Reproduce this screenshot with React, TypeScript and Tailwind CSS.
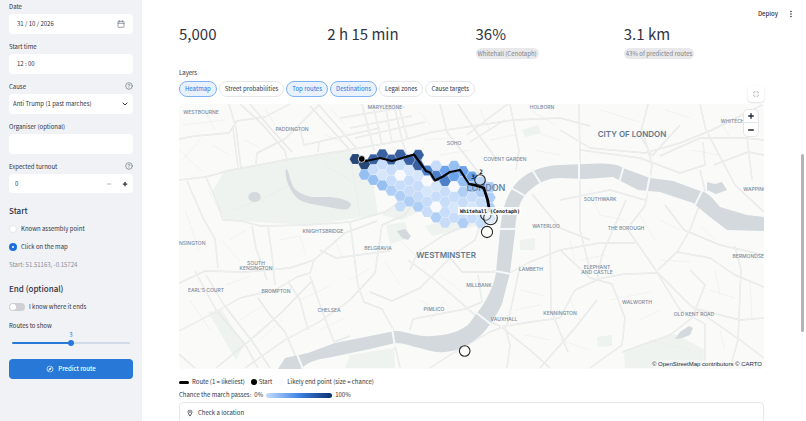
import React, { useState } from 'react';
import { Calendar, ChevronDown, CircleHelp, Maximize, Minus, Plus } from 'lucide-react';
import { MdMoreVert, MdOutlineExplore, MdOutlineLocationOn } from 'react-icons/md';

const metrics = [
  { value: '5,000', note: '' },
  { value: '2 h 15 min', note: '' },
  { value: '36%', note: 'Whitehall (Cenotaph)' },
  { value: '3.1 km', note: '43% of predicted routes' },
];

const layerNames = ['Heatmap', 'Street probabilities', 'Top routes', 'Destinations', 'Legal zones', 'Cause targets'];

// Hexagon fill per probability level, 0 is the most likely
const levels = ['#15396f', '#28549a', '#3d74c6', '#5f9be8', '#8ebbf1', '#a9cbf5', '#c3daf9', '#d3e4fb', '#f7f9fd'];

// [column, first row, one level digit per row going down]
const hexColumns: [number, number, string][] = [
  [0, 0, '0'],
  [1, 0, '04'],
  [2, 0, '164'],
  [3, -1, '1674'],
  [4, 0, '1665'],
  [5, -1, '168656'],
  [6, 0, '17665'],
  [7, -1, '117665'],
  [8, 1, '28766'],
  [9, 0, '627685'],
  [10, 1, '326666'],
  [11, 0, '438676'],
  [12, 1, '345665'],
  [13, 1, '34676'],
  [14, 2, '45666'],
  [15, 2, '5556'],
];

const hexagons = hexColumns.flatMap(([col, firstRow, cells]) =>
  cells.split('').map((level, i) => {
    const cx = 355.4 + col * 8.97;
    const cy = 159 + (col % 2) * 5.2 + (firstRow + i) * 10.35 + col * 0.15;
    const points = [0, 60, 120, 180, 240, 300]
      .map((a) => {
        const rad = (a * Math.PI) / 180;
        return `${(cx + 5.9 * Math.cos(rad)).toFixed(1)},${(cy + 5.9 * Math.sin(rad)).toFixed(1)}`;
      })
      .join(' ');
    return { points, fill: levels[Number(level)] };
  })
);

const districts: [number, number, string][] = [
  [201, 114, 'WESTBOURNE'],
  [292, 131, 'PADDINGTON'],
  [385, 109, 'MARYLEBONE'],
  [454, 145, 'SOHO'],
  [542, 109, 'HOLBORN'],
  [505, 161, 'COVENT GARDEN'],
  [323, 233, 'KNIGHTSBRIDGE'],
  [378, 250, 'BELGRAVIA'],
  [189, 245, 'KENSINGTON'],
  [256, 265, 'SOUTH'],
  [256, 270, 'KENSINGTON'],
  [206, 292, "EARL'S COURT"],
  [276, 293, 'BROMPTON'],
  [329, 312, 'CHELSEA'],
  [479, 287, 'MILLBANK'],
  [434, 311, 'PIMLICO'],
  [504, 321, 'VAUXHALL'],
  [531, 271, 'LAMBETH'],
  [560, 315, 'KENNINGTON'],
  [546, 228, 'WATERLOO'],
  [600, 201, 'SOUTHWARK'],
  [626, 230, 'THE BOROUGH'],
  [597, 269, 'ELEPHANT'],
  [597, 274, 'AND CASTLE'],
  [637, 304, 'WALWORTH'],
  [694, 316, 'OLD KENT ROAD'],
  [750, 258, 'BERMONDSEY'],
  [739, 123, 'WHITECHAPEL'],
  [755, 191, 'WAPPING'],
];

const mainRoads = [
  'M179 180 L205 177 L232 170 L285 160 L348 150 L400 141 L432 132 L480 125 L513 120 L560 118 L590 126',
  'M179 139 L195 136 L229 133 L237 121 L265 117 L290 104',
  'M229 104 L236 128 L241 168 M233 128 L238 167',
  'M240 104 L262 124 L285 151 L287 160',
  'M250 104 L272 130 L292 152',
  'M256 164 L257 153 L285 139 L318 106',
  'M300 128 L304 145 L380 128 M318 152 L319 142',
  'M310 106 L350 150 M318 104 L358 150',
  'M362 104 L374 150 M373 104 L382 145 M385 104 L392 143 M398 104 L408 140',
  'M340 118 L405 107 M350 128 L412 116 M355 138 L425 122',
  'M206 177 L218 205 L223 220 L242 221 L260 226 L308 225 L350 222 L385 212 L425 184',
  'M187 181 L203 218 L215 239 L218 268',
  'M179 283 L205 271 L245 272 L290 268 L314 260 L345 233 L377 221',
  'M252 226 L256 248 L267 280 M268 226 L272 256 L275 285',
  'M179 331 L216 312 L240 298 L275 290 L297 277 L310 273 L314 260',
  'M195 271 L216 310 L245 344 L258 368 M206 275 L224 305 L252 341 L270 368',
  'M258 298 L270 315 L285 332 L300 366',
  'M179 354 L195 368 M216 368 L248 342 L282 312 L313 280',
  'M245 368 L285 340 L319 322 L350 300 L375 273',
  'M350 222 L358 286 L364 302 L382 309 L394 331 L395 350',
  'M310 276 L320 305 L334 342 L350 336',
  'M289 283 L300 300 L308 330',
  'M320 250 L336 258 L366 254 L390 251',
  'M394 104 L402 140 L410 165 L425 184',
  'M425 184 L405 215 L382 225 L375 273',
  'M440 104 L447 132 L465 155 L484 180',
  'M458 104 L475 130 L497 160',
  'M510 104 L519 150 L516 170',
  'M467 135 L490 117 L508 104 M470 142 L505 120',
  'M408 260 L435 280 L475 315 L500 326 L530 350 L550 368',
  'M370 292 L392 301 L420 288 L453 255 L475 240 L489 200',
  'M410 270 L418 252 L444 235 L474 222',
  'M448 255 L462 272 L495 272',
  'M410 330 L413 319 L465 309 L482 302 L478 275',
  'M493 271 L510 273 L530 262 L560 250 L600 243 L635 243',
  'M500 327 L530 322 L560 318 L575 290 L597 280 L602 255 L626 200',
  'M395 345 L400 368 M430 368 L450 355 L490 332 L505 326 L510 345 L507 368',
  'M520 265 L515 290 L507 326',
  'M550 230 L551 310 L568 352 M540 368 L575 328 L597 300',
  'M560 250 L590 278 L612 284 L625 318 L622 345 L590 368',
  'M597 279 L625 274 L658 273 L690 305 L740 340 L764 358',
  'M628 230 L655 269 L680 310 L705 324',
  'M622 352 L670 335 L692 318 L705 285 L690 270',
  'M579 104 L580 160 L580 230 L590 270',
  'M643 132 L652 165 L650 180 L645 206 L630 225',
  'M580 150 L640 158 L680 173 L705 165 L703 142',
  'M560 130 L590 148 L645 153 L680 143 L712 130 L764 104',
  'M700 170 L705 190 L690 230 L677 252 L658 270',
  'M660 156 L700 138 L745 138 L764 140',
  'M648 104 L640 135 L652 156 L680 125',
  'M700 104 L706 130 L735 185 L764 212',
  'M665 205 L684 230 L720 245 L764 255',
  'M677 252 L710 258 L735 275 L764 287',
  'M735 246 L741 270 L738 340 L730 368',
  'M693 308 L740 320 L764 318 M705 323 L705 368',
  'M714 165 L748 152 L764 155 M745 120 L752 180',
  'M532 194 L560 228 L590 240 M560 200 L610 190 L645 200',
];

// Minor streets drawn thinner below the main network
const sideStreets = [
  'M183 160 L200 140 M179 150 L203 172 M208 190 L222 215 M185 210 L199 250 M222 240 L240 262',
  'M230 240 L246 230 M280 240 L300 236 L306 256 M335 240 L342 256 M226 285 L250 276 M190 300 L210 330',
  'M240 320 L262 306 M260 340 L282 320 M300 300 L330 286 M320 330 L345 318 M350 280 L370 268',
  'M385 262 L400 285 M400 240 L418 258 M420 300 L440 312 M440 275 L462 292 M430 320 L445 300',
  'M520 290 L545 296 M515 310 L540 305 M525 335 L550 340 M560 340 L590 350 M570 300 L580 320',
  'M600 215 L625 220 M590 190 L600 215 M640 215 L655 240 M660 220 L680 230 M700 225 L715 240',
  'M610 300 L650 292 M640 320 L660 310 M650 340 L690 350 M715 270 L720 295 M710 290 L735 298',
  'M720 330 L725 350 M750 280 L752 320 M660 260 L690 262 M580 260 L605 255 M570 240 L575 262',
  'M600 110 L640 122 M605 130 L635 138 M665 110 L690 118 M690 150 L720 155 M720 120 L730 138',
  'M530 110 L555 125 M525 130 L560 140 M535 150 L560 155 M480 110 L490 130 M490 140 L515 135',
  'M418 110 L430 125 M425 140 L450 138 M440 155 L470 150 M205 110 L215 130 M265 108 L275 125',
  'M182 125 L225 120 M212 145 L230 155 M245 140 L260 148 M330 108 L345 125 M325 135 L342 142',
];

const parks = [
  'M225 170 L290 158 L350 150 L372 172 L378 215 L310 225 L225 220 L212 192 Z',
  'M382 215 L418 190 L430 206 L402 220 Z',
  'M386 225 L405 222 L410 238 L390 244 Z',
  'M425 226 L474 213 L476 226 L432 236 Z',
  'M208 312 L222 310 L244 345 L236 360 Z',
  'M350 355 L394 348 L395 368 L345 368 Z',
  'M624 352 L675 334 L705 350 L702 368 L625 368 Z',
  'M520 240 L535 238 L535 250 L520 250 Z',
  'M522 130 L538 125 L541 133 L525 137 Z',
  'M597 337 L612 335 L612 346 L598 347 Z',
];

const riverPath =
  'M764 217 L747 215 L720 207 C712 198 710 194 703 192 L673 181 L650 178 L623 168 C616 163 600 163 585 164 L560 165 C540 166 525 172 514 186 C505 198 502 212 500 231 L496 272 C495 284 486 302 477 313 C471 320 470 325 463 328 C454 335 428 338 417 335 C405 333 403 331 395 331 L370 336 L335 343 L308 353 L285 358 L278 369 L301 369 C310 360 320 359 332 357 L370 349 L395 343 C405 343 410 346 420 348 C430 351 437 353 445 352 C455 351 460 349 467 345 C477 339 483 334 488 327 C496 316 502 306 503 300 L510 273 L515 232 C516 212 520 198 530 190 C540 181 550 178 560 178 L585 179 L613 177 L638 190 L660 192 L693 203 L710 217 L727 230 L764 231 Z';

const routePath =
  'M361.5 162 L380 158 L392 161 L414 154.5 L426 171 L430 172.5 L435 180.5 L443 176.5 L450 172 L460 170 L469 184 L477 185 L483.5 188 L487 199 L489.5 211';

const endPoints: [number, number, number][] = [
  [480, 180, 5.3],
  [485.8, 215, 5.2],
  [490.5, 218, 6.8],
  [487, 232, 5.6],
  [464.7, 351, 5.3],
];

const MapView = () => (
  <div className="relative overflow-hidden rounded-sm">
    <svg viewBox="179 104 585 265" preserveAspectRatio="xMidYMid slice" className="block h-[265px] w-full bg-[#fafaf8]" role="img" aria-label="Predicted march map">
      {parks.map((d) => (
        <path key={d} d={d} fill="#eef3ef" />
      ))}
      <g fill="none" strokeLinejoin="round">
        {sideStreets.map((d) => (
          <path key={d} d={d} stroke="#ededed" strokeWidth="0.6" />
        ))}
        {mainRoads.map((d) => (
          <path key={d} d={d} stroke="#e0e2e3" strokeWidth="1.4" />
        ))}
        {mainRoads.map((d) => (
          <path key={d} d={d} stroke="#f8f8f7" strokeWidth="0.6" />
        ))}
        <path d="M232 210 L260 200 L290 185 M240 180 L275 215 M300 160 L330 190 M325 165 L350 180 M350 155 L360 215" stroke="#e6ede8" strokeWidth="0.7" />
      </g>

      {/* Water */}
      <g fill="#d3d9dd">
        <path d={riverPath} />
        <ellipse cx="254.5" cy="197" rx="6.2" ry="5" />
        <path d="M286 169 C288 168 289 176 292 184 C295 192 303 195 312 197 L330 197 C340 198 350 201 351 204 C350 210 345 210 339 209 L312 204 C300 202 294 197 290 188 C286 181 285 173 286 169 Z" />
        <path d="M397 231 L405 229 L411 236 L408 240 L402 238 Z" />
        <path d="M675 339 L680 332 L689 326 L693 328 L690 335 L682 338 Z" />
        <path d="M707 182 L715 184 L722 182 L727 190 L716 194 L707 190 Z" />
      </g>
      {/* Bridges */}
      <path
        d="M579 160 L579 181 M624 166 L618 186 M650 175 L646 196 M703 189 L694 207 M495 271 L511 274 M474 311 L492 325 M392 328 L395 347 M296 352 L303 369 M499 229 L517 229 M508 186 L527 197 M531 168 L543 187"
        stroke="#f7f8f8"
        strokeWidth="2"
        fill="none"
      />

      <g fill="#7b8b9d" fontFamily="Inter, sans-serif" fontSize="5" fontWeight="500" textAnchor="middle">
        {districts.map(([x, y, name]) => (
          <text key={`${name}${x}`} x={x} y={y}>{name}</text>
        ))}
      </g>
      <g fill="#64798e" fontFamily="Inter, sans-serif" fontSize="8" fontWeight="600" textAnchor="middle">
        <text x="632" y="137">CITY OF LONDON</text>
        <text x="446" y="258">WESTMINSTER</text>
      </g>

      <g stroke="#ffffff" strokeOpacity="0.4" strokeWidth="0.4" fillOpacity="0.92">
        {hexagons.map((hex) => (
          <polygon key={hex.points} points={hex.points} fill={hex.fill} />
        ))}
      </g>
      <text x="486" y="191" fill="#6e87a8" fontFamily="Inter, sans-serif" fontSize="9" fontWeight="600" textAnchor="middle">LONDON</text>

      {/* Routes and end points */}
      <path d={routePath} fill="none" stroke="#050505" strokeWidth="2.2" strokeLinejoin="round" strokeLinecap="round" />
      <path d="M469 184 L477 186 L484 188 L488 200 L490 212" fill="none" stroke="#050505" strokeWidth="2.2" />
      <circle cx="361.7" cy="159" r="3.4" fill="#000000" stroke="#ffffff" strokeWidth="0.8" />
      {endPoints.map(([x, y, r]) => (
        <circle key={`${x}-${y}`} cx={x} cy={y} r={r} fill="#ffffff" fillOpacity="0.35" stroke="#2a2a2a" strokeWidth="1.1" />
      ))}
      <rect x="458" y="207" width="64" height="8" fill="#ffffff" fillOpacity="0.85" />
      <g fill="#111111" fontFamily="'DejaVu Sans Mono', monospace" fontWeight="700" textAnchor="middle">
        <text x="490" y="213" fontSize="5">Whitehall (Cenotaph)</text>
        <text x="481" y="174" fontSize="6">2</text>
        <text x="473" y="179" fontSize="6">3</text>
      </g>
    </svg>

    <div className="absolute top-1.5 right-1.5 flex w-3.5 flex-col divide-y divide-gray-200 rounded-sm bg-white text-gray-800 ring-1 ring-gray-200">
      <button type="button" aria-label="Zoom in" className="flex h-[13px] items-center justify-center">
        <Plus className="size-2" strokeWidth={4} />
      </button>
      <button type="button" aria-label="Zoom out" className="flex h-[13px] items-center justify-center">
        <Minus className="size-2" strokeWidth={4} />
      </button>
    </div>
    <p className="absolute right-0.5 bottom-0 bg-[#fafaf8]/50 font-['Liberation_Sans'] text-[6px] leading-[9px] text-gray-800">
      © <a href="#osm">OpenStreetMap</a> contributors © <a href="#carto">CARTO</a>
    </p>
  </div>
);

const Sidebar = () => {
  const [date, setDate] = useState('31 / 10 / 2026');
  const [time, setTime] = useState('12 : 00');
  const [organiser, setOrganiser] = useState('');
  const [turnout, setTurnout] = useState(0);
  const [startMode, setStartMode] = useState('map');
  const [knowsEnd, setKnowsEnd] = useState(false);
  const [routes, setRoutes] = useState(3);

  const percent = ((routes - 1) / 4) * 100;

  return (
    <aside className="w-[142px] shrink-0 bg-[#f0f2f6] px-[9px] pt-0.5">
      <div className="flex flex-col gap-2">
        <div>
          <label htmlFor="date" className="block h-3 leading-[10px]">Date</label>
          <div className="flex h-[20px] items-center rounded bg-white px-2">
            <input id="date" className="min-w-0 flex-1 outline-none" value={date} onChange={(e) => setDate(e.target.value)} />
            <Calendar className="size-2 text-gray-500" />
          </div>
        </div>
        <div>
          <label htmlFor="time" className="block h-3 leading-[10px]">Start time</label>
          <div className="flex h-[20px] items-center rounded bg-white px-2">
            <input id="time" className="min-w-0 flex-1 outline-none" value={time} onChange={(e) => setTime(e.target.value)} />
          </div>
        </div>
        <div>
          <div className="flex h-3 items-start justify-between">
            <label htmlFor="cause" className="leading-[10px]">Cause</label>
            <CircleHelp className="size-2 text-gray-500" />
          </div>
          <div className="relative">
            <select id="cause" className="block h-[20px] w-full appearance-none rounded bg-white px-1 outline-none">
              <option>Anti Trump (1 past marches)</option>
            </select>
            <ChevronDown className="pointer-events-none absolute top-1.5 right-1 size-2" strokeWidth={3} />
          </div>
        </div>
        <div>
          <label htmlFor="organiser" className="block h-3 leading-[10px]">Organiser (optional)</label>
          <input id="organiser" className="block h-[20px] w-full rounded bg-white px-1 outline-none" value={organiser} onChange={(e) => setOrganiser(e.target.value)} />
        </div>
        <div>
          <div className="flex h-3 items-start justify-between">
            <label htmlFor="turnout" className="leading-[10px]">Expected turnout</label>
            <CircleHelp className="size-2 text-gray-500" />
          </div>
          <div className="flex h-[19px] items-center rounded bg-white pl-1.5">
            <input id="turnout" className="min-w-0 flex-1 outline-none" value={turnout} onChange={(e) => setTurnout(Number(e.target.value) || 0)} />
            <button type="button" aria-label="Decrease" className="flex size-4 items-center justify-center text-gray-400" onClick={() => setTurnout(Math.max(0, turnout - 100))}>
              <Minus className="size-1.5" strokeWidth={3} />
            </button>
            <button type="button" aria-label="Increase" className="flex size-4 items-center justify-center" onClick={() => setTurnout(turnout + 100)}>
              <Plus className="size-1.5" strokeWidth={5} />
            </button>
          </div>
        </div>
      </div>

      <h2 className="mt-3 text-[8px] leading-3 font-medium">Start</h2>
      <div className="mt-1.5 flex flex-col gap-1.5">
        <label className="flex h-3 items-center gap-1">
          <input type="radio" name="start" className="size-2 appearance-none rounded-full border border-gray-200 bg-white checked:border-[3px] checked:border-[#1c6fe0]" checked={startMode === 'point'} onChange={() => setStartMode('point')} />
          Known assembly point
        </label>
        <label className="flex h-3 items-center gap-1">
          <input type="radio" name="start" className="size-2 appearance-none rounded-full border border-gray-200 bg-white checked:border-[3px] checked:border-[#1c6fe0]" checked={startMode === 'map'} onChange={() => setStartMode('map')} />
          Click on the map
        </label>
        <p className="h-3 leading-3 text-[#8b8d96]">Start: 51.51163, -0.15724</p>
      </div>

      <h2 className="mt-3 text-[8px] leading-3 font-medium">End (optional)</h2>
      <label className="mt-1.5 flex h-3 items-center gap-1">
        <input
          type="checkbox"
          role="switch"
          className="flex h-2 w-4 appearance-none items-center rounded-full bg-[#cfd0d6] px-px before:size-1.5 before:rounded-full before:bg-white checked:justify-end checked:bg-[#1c6fe0]"
          checked={knowsEnd}
          onChange={(e) => setKnowsEnd(e.target.checked)}
        />
        I know where it ends
      </label>

      <label htmlFor="routes" className="mt-2 block leading-[10px]">Routes to show</label>
      <div className="px-[3px]">
        <output htmlFor="routes" className="block text-center leading-2 text-[#1c78e0]" style={{ marginLeft: `${percent * 2 - 100}%` }}>{routes}</output>
        <input
          id="routes"
          type="range"
          min={1}
          max={5}
          className="block h-2 w-full appearance-none bg-transparent [&::-webkit-slider-runnable-track]:h-0.5 [&::-webkit-slider-runnable-track]:rounded-full [&::-webkit-slider-runnable-track]:bg-[linear-gradient(to_right,#2878d8_var(--fill),#d0dcea_var(--fill))] [&::-webkit-slider-thumb]:-mt-0.5 [&::-webkit-slider-thumb]:size-1.5 [&::-webkit-slider-thumb]:appearance-none [&::-webkit-slider-thumb]:rounded-full [&::-webkit-slider-thumb]:bg-[#2878d8]"
          style={{ '--fill': `${percent}%` } as React.CSSProperties}
          value={routes}
          onChange={(e) => setRoutes(Number(e.target.value))}
        />
      </div>

      <button type="button" className="mt-3 flex h-5 w-full items-center justify-center gap-1 rounded bg-[#2878d8] font-medium text-white">
        <MdOutlineExplore className="size-2" />
        Predict route
      </button>
    </aside>
  );
};

const App = () => {
  const [active, setActive] = useState(['Heatmap', 'Top routes', 'Destinations']);

  const toggleLayer = (name: string) => {
    setActive((prev) => (prev.includes(name) ? prev.filter((n) => n !== name) : [...prev, name]));
  };

  return (
    <div className="relative flex h-screen overflow-hidden bg-white font-['Noto_Sans_CJK_SC',sans-serif] text-[6px] leading-[10px] text-[#31333f]">
      <Sidebar />

      <div className="min-w-0 flex-1">
        <header className="flex h-6 items-center justify-end gap-2 pt-1 pr-2.5">
          <button type="button" className="font-medium">Deploy</button>
          <button type="button" aria-label="Menu">
            <MdMoreVert className="size-2.5" />
          </button>
        </header>

        <main className="pr-[42px] pl-[37px]">
          <section className="grid grid-cols-4 gap-2">
            {metrics.map((metric) => (
              <div key={metric.value} className="h-9">
                <p className="h-6 text-[15px] leading-[20px]">{metric.value}</p>
                {metric.note && (
                  <p className="flex h-[11px] w-fit items-center rounded-full bg-[#e9e9eb] px-0.5 text-[#808189]">{metric.note}</p>
                )}
              </div>
            ))}
          </section>

          <section className="mt-2">
            <p className="leading-[10px]">Layers</p>
            <div className="mt-[3px] flex gap-0.5">
              {layerNames.map((name) => (
                <button
                  key={name}
                  type="button"
                  aria-pressed={active.includes(name)}
                  onClick={() => toggleLayer(name)}
                  className={
                    active.includes(name)
                      ? 'h-4 rounded-full border border-[#7fb2f0] bg-[#e8f1fc] px-[5px] leading-none text-[#1c78e0]'
                      : 'h-4 rounded-full border border-gray-200 px-[5px] leading-none'
                  }
                >
                  {name}
                </button>
              ))}
            </div>
          </section>

          <section className="relative mt-[7px]">
            <button type="button" aria-label="Fullscreen" className="absolute right-0 bottom-full mb-0.5 flex size-4 items-center justify-center rounded bg-white text-gray-500 shadow-sm">
              <Maximize className="size-1.5" />
            </button>
            <MapView />
          </section>

          <section className="mt-2 flex flex-col gap-[3px]">
            <div className="flex items-center gap-1.5">
              <span className="flex items-center gap-[3px]">
                <span className="h-[3px] w-2.5 rounded-full bg-black" />
                Route (1 = likeliest)
              </span>
              <span className="flex items-center gap-0.5">
                <span className="size-1.5 rounded-full bg-black" />
                Start
              </span>
              <span className="flex items-center gap-[3px]">
                <span className="size-1.5 rounded-full bg-gray-50" />
                Likely end point (size = chance)
              </span>
            </div>
            <div className="flex items-center gap-[3px]">
              <span>Chance the march passes:</span>
              <span>0%</span>
              <span className="h-[5px] w-[66px] rounded-full bg-linear-to-r from-[#c6dcfa] via-[#3f84e4] to-[#0b3170]" />
              <span>100%</span>
            </div>
          </section>

          <details className="mt-0.5 rounded border border-gray-200">
            <summary className="flex h-5 list-none items-center gap-1 px-1.5">
              <MdOutlineLocationOn className="size-2" />
              Check a location
            </summary>
            <p className="px-1.5 pb-1">Click the map to see the chance the march passes.</p>
          </details>
        </main>
      </div>

      <div className="absolute top-[154px] right-0.5 h-[178px] w-[3px] rounded-full bg-[#b4b4b8]" />
    </div>
  );
};

export default App;
